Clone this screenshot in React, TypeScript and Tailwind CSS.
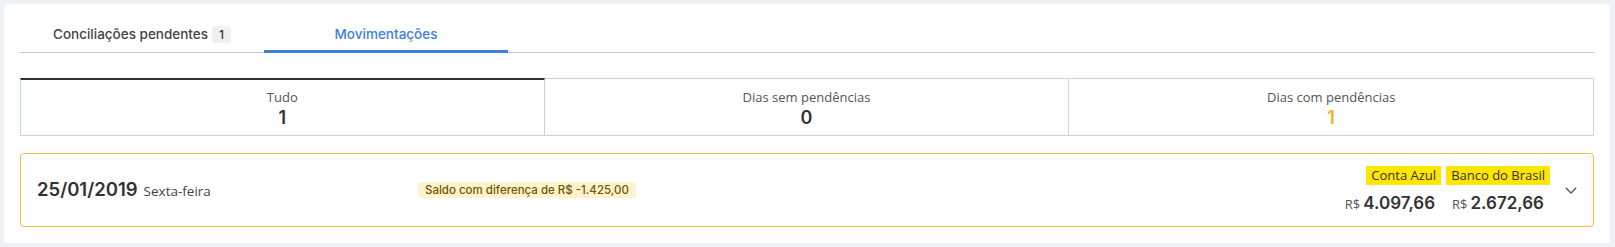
import React from "react";

const stats = [
  { label: "Tudo", value: "1", active: true, tone: "text-[#333]" },
  { label: "Dias sem pendências", value: "0", active: false, tone: "text-[#333]" },
  { label: "Dias com pendências", value: "1", active: false, tone: "text-[#f6b21f]" },
];

const balances = [
  { source: "Conta Azul", amount: "4.097,66" },
  { source: "Banco do Brasil", amount: "2.672,66" },
];

function Chevron() {
  return (
    <svg width="12" height="7" viewBox="0 0 12 7" fill="none">
      <polyline points="0.8,0.8 6,6 11.2,0.8" stroke="#555" strokeWidth="1.3" />
    </svg>
  );
}

export default function App() {
  return (
    <div className="min-h-[247px] bg-[#eef1f6] pt-1 pl-1 font-['Open_Sans',sans-serif]">
      <div className="w-[1606px] h-[239px] rounded bg-white px-4 pt-[13px] pb-4">
        {/* tabs */}
        <div className="flex h-9 border-b border-[#c9c9c9]">
          <div className="w-[244px] flex items-center justify-center gap-1 text-[13.5px] font-medium text-[#444] font-['Inter',sans-serif]">
            <span>Conciliações pendentes</span>
            <span className="rounded bg-[#f0f0f2] px-[7px] text-[12px] leading-[17px] text-[#333]">1</span>
          </div>
          <div className="relative w-[244px] flex items-center justify-center text-[13.5px] font-medium text-[#3d7fde] font-['Inter',sans-serif]">
            Movimentações
            <span className="absolute left-0 right-0 bottom-[-1px] h-[3px] bg-[#3d7fde]" />
          </div>
        </div>

        {/* counters */}
        <div className="mt-[25px] grid grid-cols-3 h-[58px]">
          {stats.map((s, i) => (
            <div
              key={s.label}
              className={`flex flex-col items-center border-b border-r border-[#cbd3df] ${
                i === 0 ? "border-l" : ""
              } ${s.active ? "border-t-2 border-t-[#333] pt-[7px]" : "border-t pt-2"}`}
            >
              <span className="text-[13px] leading-5 text-[#555]">{s.label}</span>
              <span className={`text-[18px] leading-[22px] font-semibold font-['Inter',sans-serif] ${s.tone}`}>
                {s.value}
              </span>
            </div>
          ))}
        </div>

        {/* day row */}
        <div className="mt-[17px] h-[74px] flex items-center rounded border border-[#f4be3e] px-4">
          <div className="w-[381px] flex items-baseline gap-[6px]">
            <span className="text-[18.5px] font-semibold text-[#333] font-['Inter',sans-serif]">25/01/2019</span>
            <span className="text-[13.5px] text-[#444]">Sexta-feira</span>
          </div>
          <span className="rounded bg-[#fdf3cc] px-[7px] text-[11.5px] leading-4 font-medium text-[#735400] font-['Inter',sans-serif]">
            Saldo com diferença de R$ -1.425,00
          </span>
          <div className="ml-auto flex items-center">
            <div className="flex gap-[5px]">
              {balances.map((b) => (
                <div key={b.source} className="flex flex-col items-end">
                  <span className="bg-[#ffe600] px-[5px] text-[13px] leading-[19px] text-[#333]">{b.source}</span>
                  <span className="mt-[7px] pr-[6px] flex items-baseline gap-[3px] leading-[22px]">
                    <span className="text-[13px] text-[#555]">R$</span>
                    <span className="text-[17px] font-semibold text-[#333] font-['Inter',sans-serif]">{b.amount}</span>
                  </span>
                </div>
              ))}
            </div>
            <div className="ml-[15px] flex items-center">
              <Chevron />
            </div>
          </div>
        </div>
      </div>
    </div>
  );
}
